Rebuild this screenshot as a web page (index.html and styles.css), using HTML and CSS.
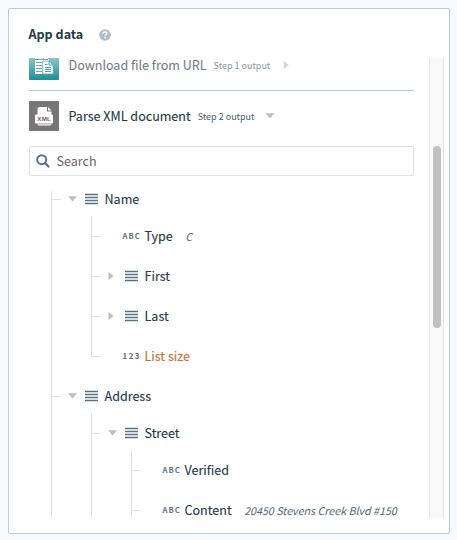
FILE: index.html
```html
<!DOCTYPE html>
<html lang="en">
<head>
<meta charset="utf-8">
<title>App data</title>
<link rel="stylesheet" href="styles.css">
</head>
<body>
<svg class="defs" width="0" height="0" aria-hidden="true">
  <symbol id="object" viewBox="0 0 13 12">
    <path fill="#d5dde2" d="M0 0h13v12H0z"/>
    <path fill="#587282" d="M0 1h13v1H0zM0 4h13v1H0zM0 7h13v1H0zM0 10h13v1H0z"/>
  </symbol>
</svg>
<main class="card">
  <header class="head">
    <h1 class="title">App data</h1>
    <svg class="help" width="12" height="12" viewBox="0 0 12 12">
      <circle cx="6" cy="6" r="5.8" fill="#b1bdc7"/>
      <path d="M4.1 4.8C4.1 3.5 4.9 2.9 6 2.9s1.9.7 1.9 1.6C7.9 5.8 6.1 5.7 6.1 7.1" fill="none" stroke="#fff" stroke-width="1.5"/>
      <path d="M5.3 8h1.5v1.4H5.3z" fill="#fff"/>
    </svg>
  </header>
  <div class="viewport">
    <div class="content">
      <section class="step step-closed">
        <svg class="app" width="30" height="30" viewBox="0 0 30 30">
          <defs><linearGradient id="teal" x2="0" y2="1"><stop stop-color="#a6d5d8"/><stop offset=".25" stop-color="#8cc8cc"/><stop offset="1" stop-color="#208d94"/></linearGradient></defs>
          <rect width="30" height="30" rx="1" fill="url(#teal)"/>
          <path fill="#fff" d="M6 5h8v4h1V5h4v4h1v3h-6v12H6z"/>
          <path d="M6 9.5h13M7 12.5h6M7 15.5h6M7 18.5h6M7 21.5h6" stroke="#62adb2" stroke-width="1"/>
          <path fill="#fff" stroke="#4aa2a8" stroke-width=".7" d="M13.7 11h6.5l4 4v9h-10.5z"/>
          <path fill="none" stroke="#4aa2a8" d="M20 11v4h4M16 14.5h2.5M16 17.5h6M16 19.5h6M16 21.5h6"/>
        </svg>
        <span class="name download">Download file from URL</span>
        <span class="output">Step 1 output</span>
        <i class="arrow right"></i>
      </section>
      <section class="step">
        <svg class="app" width="30" height="30" viewBox="0 0 30 30">
          <rect width="30" height="30" rx="1" fill="#777"/>
          <path fill="#fff" d="M10.5 6H18v4.5h4.5V14H8.5V8Q8.5 6 10.5 6zM19 6l3.5 3.5H19zM8.5 22h13.8v1.2q0 1.3-1.5 1.3H10q-1.5 0-1.5-1.3z"/>
          <rect x="6" y="13.5" width="18" height="9" rx="1.2" fill="#fff"/>
          <path d="M8.5 22.9h13.8" stroke="#777" stroke-width=".7"/>
          <text x="15.2" y="20.3" text-anchor="middle" class="xml">XML</text>
        </svg>
        <span class="name">Parse XML document</span>
        <span class="output">Step 2 output</span>
        <i class="arrow down"></i>
      </section>
      <div class="search">
        <svg width="14" height="14" viewBox="0 0 14 14" fill="none" stroke="#587384">
          <circle cx="5.7" cy="5.7" r="4.5" stroke-width="2"/>
          <path d="M9 9l3.5 3.5" stroke-width="2.3" stroke-linecap="round"/>
        </svg>
        <span>Search</span>
      </div>
      <ul class="tree root">
        <li>
          <div class="row"><i class="arrow down"></i><svg class="object"><use href="#object"/></svg><span class="label">Name</span></div>
          <ul class="tree">
            <li><div class="row"><span class="type">ABC</span><span class="label">Type</span><em class="sample">C</em></div></li>
            <li><div class="row"><i class="arrow right"></i><svg class="object"><use href="#object"/></svg><span class="label">First</span></div></li>
            <li><div class="row"><i class="arrow right"></i><svg class="object"><use href="#object"/></svg><span class="label">Last</span></div></li>
            <li class="last"><div class="row"><span class="type number">123</span><span class="label size">List size</span></div></li>
          </ul>
        </li>
        <li>
          <div class="row"><i class="arrow down"></i><svg class="object"><use href="#object"/></svg><span class="label">Address</span></div>
          <ul class="tree">
            <li>
              <div class="row"><i class="arrow down"></i><svg class="object"><use href="#object"/></svg><span class="label">Street</span></div>
              <ul class="tree">
                <li><div class="row"><span class="type">ABC</span><span class="label">Verified</span></div></li>
                <li><div class="row"><span class="type">ABC</span><span class="label">Content</span><em class="sample">20450 Stevens Creek Blvd #150</em></div></li>
              </ul>
            </li>
          </ul>
        </li>
      </ul>
    </div>
    <div class="track"><div class="thumb"></div></div>
  </div>
</main>
</body>
</html>
```

FILE: styles.css
```css
* { box-sizing: border-box; }
body {
  margin: 0;
  padding: 8px;
  background: #f8fafc;
  color: #1d3b49;
  font-family: "Noto Sans CJK SC", "Noto Sans", sans-serif;
  font-size: 12.55px;
  line-height: 20px;
  white-space: nowrap;
}
.defs { position: absolute; }
.card {
  width: 442px;
  height: 526px;
  background: #fff;
  border: 1px solid #bdcbd5;
  border-radius: 2px;
}
.head {
  display: flex;
  align-items: center;
  height: 49px;
  padding: 3px 0 0 19.5px;
}
.title {
  width: 70.5px;
  margin: 0 0 2px;
  font-size: 12.55px;
  font-weight: 700;
}
.help { display: block; }
.viewport {
  display: flex;
  height: 460px;
  overflow: hidden;
}
.content {
  width: 385px;
  margin: -8px 15px 0 20px;
}
.step {
  display: flex;
  align-items: center;
  height: 30px;
  margin-bottom: 15px;
}
.step-closed {
  height: 41px;
  padding-bottom: 10px;
  margin-bottom: 10px;
  border-bottom: 1px solid #bdcbd5;
}
.step-closed .name, .step-closed .output, .step-closed .arrow { opacity: .65; }
.app {
  display: block;
  flex: none;
  margin-right: 9.5px;
}
.name, .label { -webkit-text-stroke: .12px; }
.xml {
  fill: #666;
  font: 700 6.2px "Liberation Sans", sans-serif;
  letter-spacing: .3px;
}
.output {
  margin: 2px 10.5px 0 7px;
  color: #425f6e;
  font-size: 9px;
}
.search {
  display: flex;
  align-items: center;
  gap: 6.5px;
  height: 30px;
  padding-left: 6px;
  border: 1px solid #dfe3e8;
  border-radius: 2px;
  color: #666;
}
.tree {
  margin: -3px 0 0 40px;
  padding: 0;
  list-style: none;
}
.root { margin: 3px 0 0 22px; }
.tree > li { position: relative; }
.tree > li::before {
  content: "";
  position: absolute;
  top: 0;
  bottom: 0;
  left: 0;
  width: 1px;
  background: #dfe1e6;
}
.root > li:first-child::before { top: 12px; }
.tree > li.last::before { bottom: 19px; }
.row {
  display: flex;
  align-items: center;
  height: 40px;
  padding-left: 16.5px;
}
.row::before {
  content: "";
  position: absolute;
  top: 20px;
  left: 1px;
  width: 9px;
  height: 1px;
  background: #dfe1e6;
}
.arrow {
  flex: none;
  width: 10px;
  height: 8px;
  background: #bebebe;
}
.down { clip-path: polygon(5% 15%, 95% 15%, 50% 80%); }
.right { clip-path: polygon(10% 0, 60% 50%, 10% 100%); }
.step-closed .right { margin-left: 2px; }
.object {
  flex: none;
  width: 13px;
  height: 12px;
  margin: 0 6.5px 0 7.5px;
}
.type {
  width: 22px;
  margin-left: 15px;
  color: #587282;
  font-size: 7.7px;
  font-weight: 700;
  letter-spacing: 1.1px;
}
.number { letter-spacing: 1.6px; }
.size { color: #c17336; }
.sample {
  margin: 1px 0 0 12.5px;
  color: #4c6877;
  font-size: 10.7px;
}
.track {
  width: 15px;
  padding: 88px 3px 0;
  background: #fafafa;
  border: 1px solid #e6e6e6;
  border-width: 0 1px;
}
.thumb {
  width: 8px;
  height: 182px;
  border-radius: 4px;
  background: #c1c1c1;
}
```
